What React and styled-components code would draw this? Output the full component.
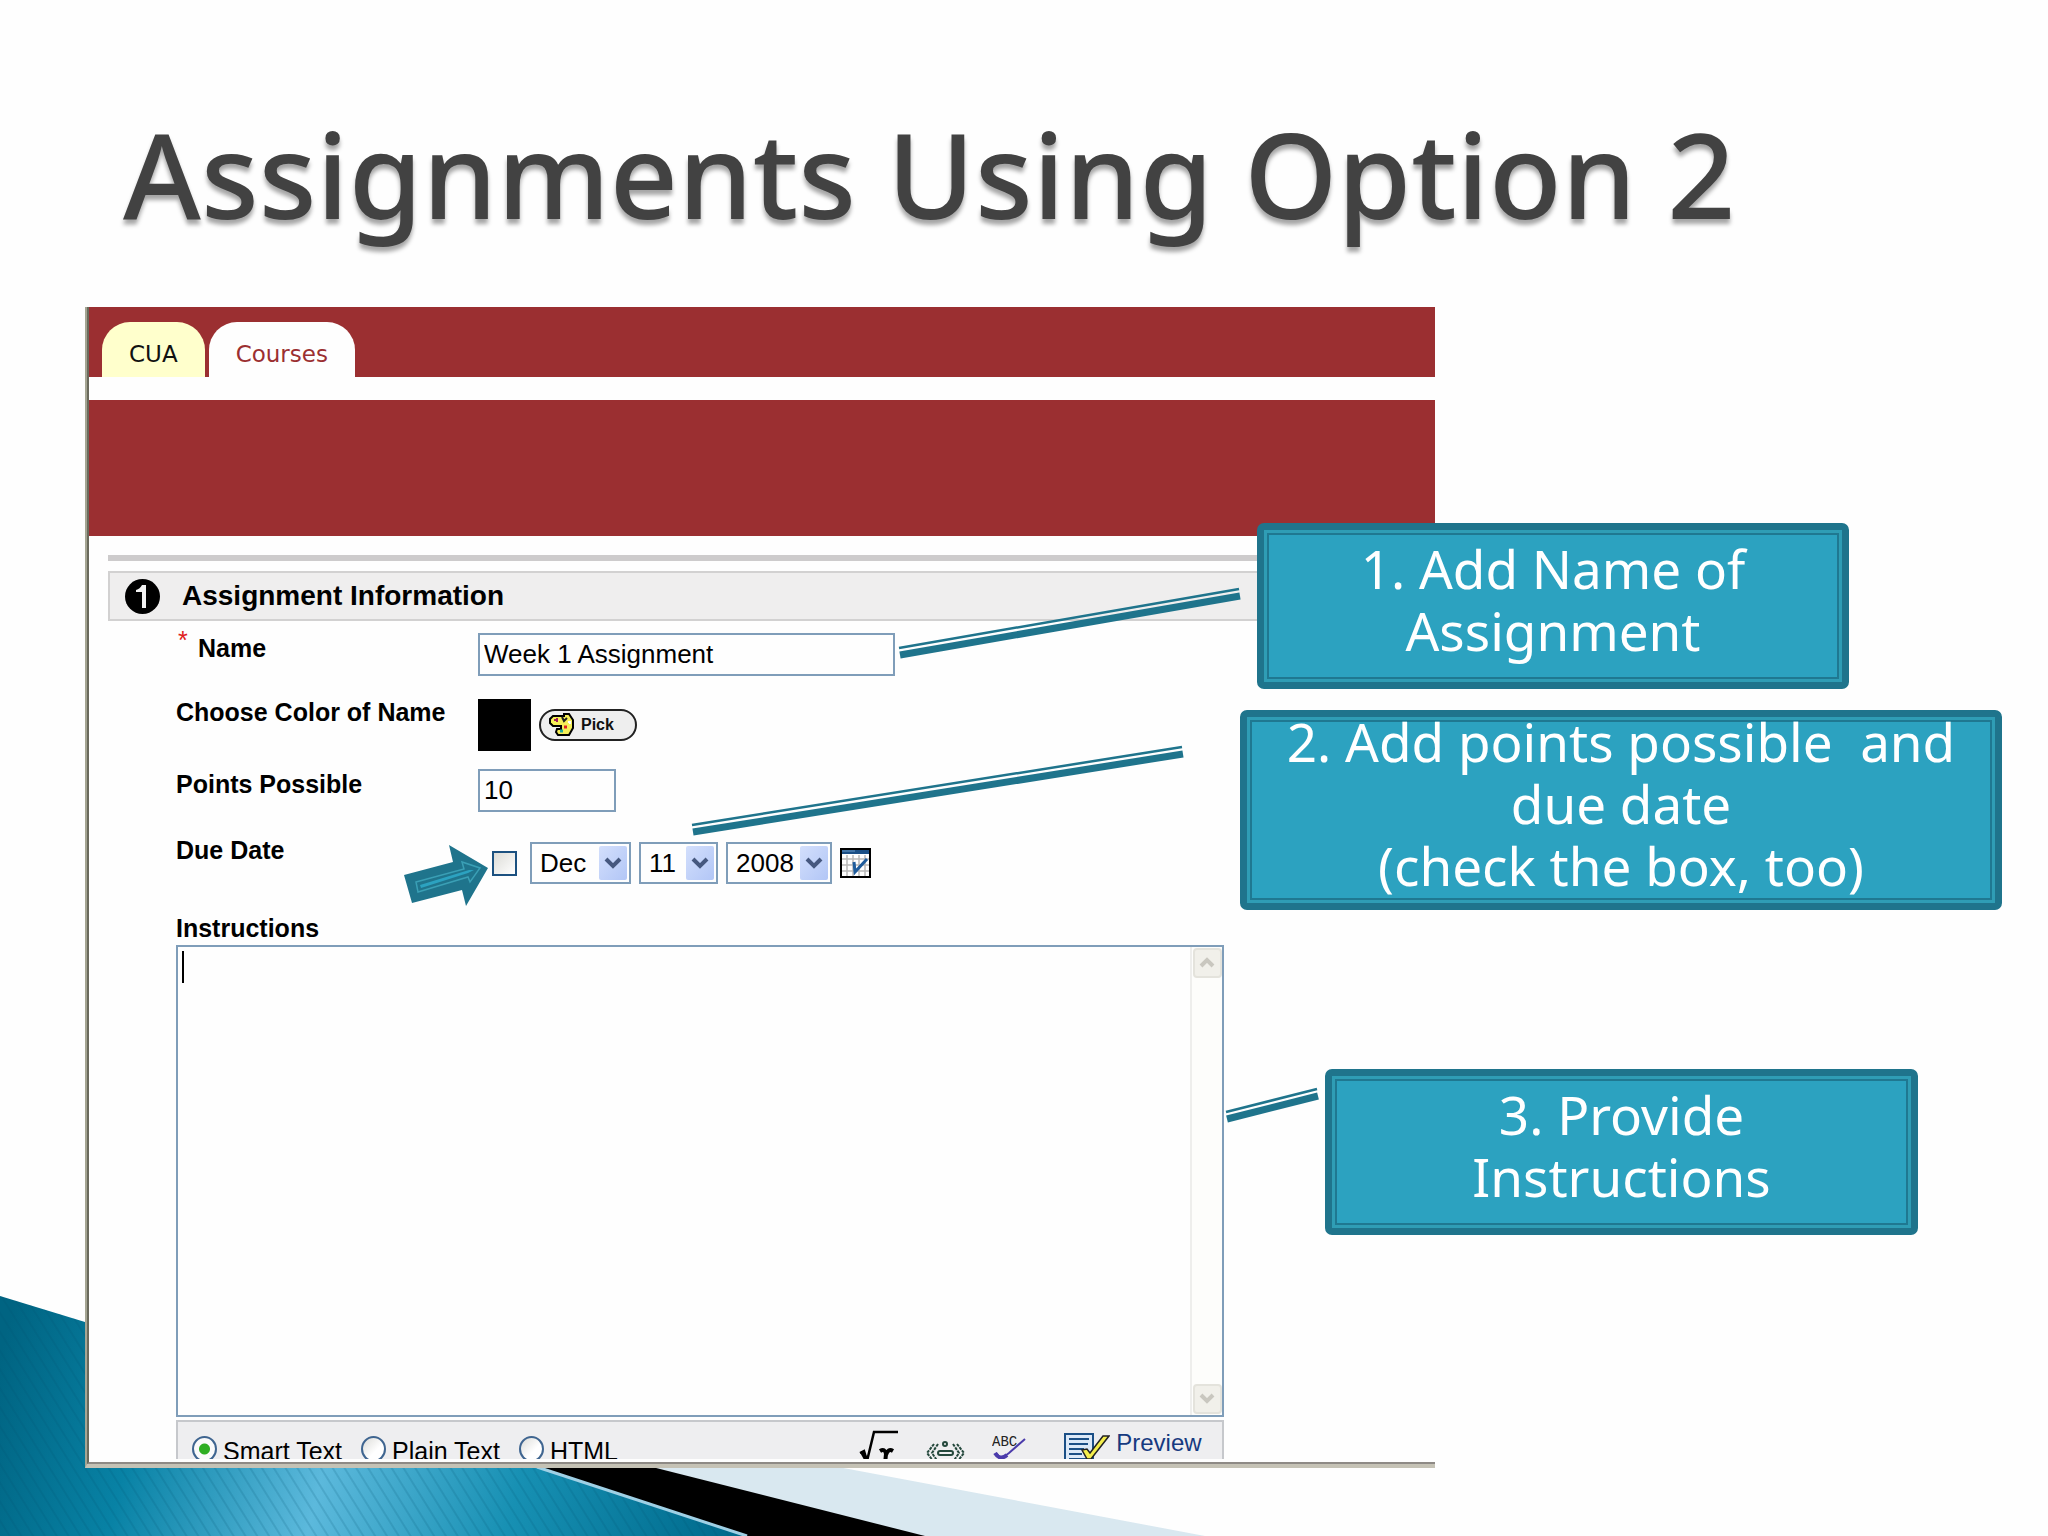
import React from "react";
import styled, { createGlobalStyle } from "styled-components";

const GlobalStyle = createGlobalStyle`
  * {
    box-sizing: border-box;
  }

  body {
    margin: 0;
    background: #fefefe;
    font-family: "Liberation Sans", Arial, sans-serif;
    color: #000;
  }
`;

const Slide = styled.main`
  position: relative;
  min-height: 100vh;
  padding: 0 0 68px 85px;
  overflow: hidden;
`;

const Title = styled.h1`
  margin: 0;
  padding: 103px 0 64px 38px;
  font-family: "Noto Sans", sans-serif;
  font-size: 119px;
  line-height: 140px;
  font-weight: 500;
  color: #424242;
  text-shadow: 0 5px 4px rgba(0, 0, 0, 0.35);
`;

const Waves = styled.svg`
  position: absolute;
  left: 0;
  bottom: 0;
`;

const Overlay = styled.svg`
  position: absolute;
  top: 0;
  left: 0;
  width: 100%;
  height: 100%;
  pointer-events: none;
`;

const Stage = styled.div`
  position: relative;
  display: grid;
  grid-template-columns: 11fr 5fr;
`;

const Panel = styled.section`
  background: #fefefe;
  border-left: 2px solid #a5a593;
  border-bottom: 4px solid #c5c2b5;
`;

const PanelBody = styled.div`
  border-left: 2px solid #6a6a5c;
  border-bottom: 2px solid #8e8a85;
  padding-bottom: 3px;
`;

const TabBar = styled.nav`
  display: flex;
  align-items: flex-end;
  gap: 4px;
  height: 70px;
  padding-left: 13px;
  background: #9b2f31;
`;

const Tab = styled.a`
  height: 55px;
  padding: 9px 27px 0;
  border-radius: 28px 28px 0 0;
  background: ${(props) => (props.$active ? "#fefefe" : "#ffffcc")};
  color: ${(props) => (props.$active ? "#9b2f31" : "#111")};
  font-family: "DejaVu Sans", Verdana, sans-serif;
  font-size: 23px;
  line-height: 46px;
  text-decoration: none;
`;

const Banner = styled.div`
  height: 136px;
  margin-top: 23px;
  background: #9b2f31;
`;

const Content = styled.div`
  padding: 19px 0 0 19px;
`;

const Rule = styled.hr`
  height: 6px;
  margin: 0 0 10px;
  border: 0;
  background: #cdcbcc;
`;

const SectionHeader = styled.header`
  display: flex;
  align-items: center;
  gap: 22px;
  height: 50px;
  padding-left: 15px;
  border: 2px solid #d2d1d1;
  border-right: 0;
  background: #efeeee;
`;

const SectionTitle = styled.h2`
  margin: 0;
  font-size: 28px;
  line-height: 36px;
`;

const Form = styled.form`
  padding: 12px 211px 0 68px;
`;

const Row = styled.div`
  display: grid;
  grid-template-columns: 302px 1fr;
  align-items: start;
  height: ${(props) => props.$height}px;
`;

const Label = styled.label`
  display: flex;
  font-size: 25px;
  line-height: 30px;
  font-weight: bold;
`;

const Required = styled.span`
  width: 22px;
  padding-left: 2px;
  color: #e02020;
  font-size: 25px;
  line-height: 14px;
  font-weight: normal;
`;

const Controls = styled.div`
  display: flex;
  align-items: center;
  gap: 8px;
  padding-top: ${(props) => props.$drop || 0}px;
`;

const TextInput = styled.input`
  width: ${(props) => props.$width}px;
  height: 43px;
  padding: 0 4px;
  border: 2px solid #7f9db9;
  border-radius: 0;
  background: #fefefe;
  font-family: inherit;
  font-size: 26px;
`;

const Swatch = styled.span`
  width: 53px;
  height: 52px;
  background: #000;
`;

const PickButton = styled.button`
  display: flex;
  align-items: center;
  gap: 7px;
  width: 98px;
  height: 32px;
  padding: 0 8px;
  border: 2px solid #222;
  border-radius: 16px;
  background: #eee;
  color: #111;
  font-family: inherit;
  font-size: 16px;
  font-weight: bold;
`;

const CheckBox = styled.input`
  appearance: none;
  width: 25px;
  height: 25px;
  margin: 0 5px 0 14px;
  border: 2px solid #1c5180;
  background: linear-gradient(135deg, #dcdcd7, #fff);
`;

const SelectBox = styled.span`
  position: relative;
  width: ${(props) => props.$width}px;
  height: 42px;

  svg {
    position: absolute;
    top: 4px;
    right: 4px;
    pointer-events: none;
  }
`;

const Select = styled.select`
  appearance: none;
  width: 100%;
  height: 100%;
  padding: 0 0 0 8px;
  border: 2px solid #7f9db9;
  border-radius: 0;
  background: #fefefe;
  color: #000;
  font-family: inherit;
  font-size: 26px;
`;

const IconButton = styled.button`
  display: flex;
  padding: 0;
  border: 0;
  background: none;
`;

const Editor = styled.div`
  position: relative;
  display: flex;
  height: 472px;
  margin-top: 2px;
  border: 2px solid #7f9db9;
`;

const Instructions = styled.textarea`
  flex: 1;
  padding: 4px;
  border: 0;
  outline: 0;
  resize: none;
  background: #fefefe;
  font-family: inherit;
  font-size: 26px;
`;

const Caret = styled.span`
  position: absolute;
  top: 4px;
  left: 4px;
  width: 2px;
  height: 32px;
  background: #000;
`;

const ScrollBar = styled.div`
  display: flex;
  flex-direction: column;
  justify-content: space-between;
  width: 32px;
  padding: 1px;
  border-left: 2px solid #eeeeec;
  background: #fdfdfb;
`;

const ScrollButton = styled.button`
  display: flex;
  align-items: center;
  justify-content: center;
  width: 29px;
  height: 30px;
  padding: 0;
  border: 2px solid #e4e3dc;
  border-radius: 4px;
  background: #f1f0ea;
`;

const Toolbar = styled.div`
  display: flex;
  align-items: flex-start;
  justify-content: space-between;
  height: 39px;
  margin-top: 3px;
  padding: 6px 20px 0 14px;
  border: 2px solid #c6c8cc;
  border-bottom: 0;
  background: #eeeef0;
  overflow: hidden;
`;

const Modes = styled.div`
  display: flex;
  gap: 19px;
  padding-top: 8px;
`;

const Mode = styled.label`
  display: flex;
  gap: 6px;
  font-size: 25px;
  line-height: 30px;
`;

const Radio = styled.input`
  appearance: none;
  width: 25px;
  height: 26px;
  margin: 0;
  border: 2px solid #3f6590;
  border-radius: 50%;
  background: linear-gradient(135deg, #dcdcd8, #fff 60%);

  &:checked {
    background: radial-gradient(circle, #2fae22 0 5px, #fafafa 6px);
  }
`;

const Tools = styled.div`
  display: flex;
  align-items: flex-start;
  gap: 27px;
`;

const PreviewLink = styled.a`
  display: flex;
  gap: 6px;
  margin-left: 11px;
  color: #163a80;
  font-size: 24px;
  line-height: 30px;
  text-decoration: none;
`;

const Callout = styled.aside`
  position: absolute;
  top: ${(props) => props.$top}px;
  left: ${(props) => props.$left}px;
  display: flex;
  align-items: center;
  justify-content: center;
  width: ${(props) => props.$width}px;
  height: ${(props) => props.$height}px;
  padding-bottom: 13px;
  border: 7px solid #1f748c;
  border-radius: 7px;
  background: #2ca2c0;
  box-shadow: inset 0 0 0 3px #2f9db5, inset 0 0 0 5px #1f7891;
  color: #fff;
  font-family: "Noto Sans", sans-serif;
  font-size: 53px;
  line-height: 62px;
  text-align: center;
  white-space: pre;
`;

const connectors = [
  { x1: 899, y1: 648, x2: 1239, y2: 589 },
  { x1: 692, y1: 825, x2: 1182, y2: 747 },
  { x1: 1226, y1: 1112, x2: 1317, y2: 1089 },
];

const callouts = [
  { top: 216, left: 1172, width: 592, height: 166, text: "1. Add Name of\nAssignment" },
  {
    top: 403,
    left: 1155,
    width: 762,
    height: 200,
    text: "2. Add points possible  and\ndue date\n(check the box, too)",
  },
  { top: 762, left: 1240, width: 593, height: 166, text: "3. Provide\nInstructions" },
];

const SlideWaves = () => (
  <Waves width="1210" height="240" viewBox="0 0 1210 240" aria-hidden="true">
    <defs>
      <linearGradient id="teal" gradientUnits="userSpaceOnUse" x1="0" y1="60" x2="720" y2="240">
        <stop offset="0" stopColor="#006482" />
        <stop offset="0.2" stopColor="#0882a5" />
        <stop offset="0.46" stopColor="#5cb9dc" />
        <stop offset="0.72" stopColor="#1790b3" />
        <stop offset="1" stopColor="#006c8e" />
      </linearGradient>
      <pattern
        id="stripes"
        width="10"
        height="10"
        patternUnits="userSpaceOnUse"
        patternTransform="rotate(-32)"
      >
        <rect width="2" height="10" fill="#00506e" opacity="0.16" />
      </pattern>
    </defs>
    <path d="M580 150 H726 L1205 240 H740 Z" fill="#d9e8f0" />
    <path d="M480 150 H569 L925 240 H700 Z" fill="#000" />
    <path d="M0 0 L85 26 L541 172 L748 240 H0 Z" fill="url(#teal)" />
    <path d="M0 0 L85 26 L541 172 L748 240 H0 Z" fill="url(#stripes)" />
    <path d="M537 171 L747 240" stroke="#9fd0e5" strokeWidth="3" />
  </Waves>
);

const Arrow = () => (
  <g>
    <path d="M404 875 L453 862 L449 845 L488 868 L466 906 L462 890 L412 903 Z" fill="#1f748c" />
    <path
      d="M416 882 L464 869 L462 862 L480 868 L470 882 L468 877 L418 892 Z"
      fill="#1f748c"
      stroke="#3a9fb5"
      strokeWidth="1.5"
    />
    <path d="M420 885 L469 870 L474 870 L468 873 L421 888 Z" fill="#2ca2c0" />
  </g>
);

const Chevron = () => (
  <svg width="28" height="34" viewBox="0 0 28 34" aria-hidden="true">
    <defs>
      <linearGradient id="chevron-fill" x1="0" y1="0" x2="1" y2="1">
        <stop offset="0" stopColor="#d3dffc" />
        <stop offset="1" stopColor="#b2c6f6" />
      </linearGradient>
    </defs>
    <rect width="28" height="34" rx="2" fill="url(#chevron-fill)" />
    <path d="M7 13 L14 20 L21 13" fill="none" stroke="#46587f" strokeWidth="4" />
  </svg>
);

const ScrollArrow = ({ down }) => (
  <svg width="18" height="14" viewBox="0 0 18 14" aria-hidden="true">
    <path
      d={down ? "M3 3 L9 9 L15 3" : "M3 10 L9 4 L15 10"}
      fill="none"
      stroke="#c9c7bf"
      strokeWidth="4"
    />
  </svg>
);

const NumberOne = () => (
  <svg width="35" height="35" viewBox="0 0 35 35" aria-hidden="true">
    <circle cx="17.5" cy="17.5" r="17.5" fill="#000" />
    <path d="M11 11 Q15 10 17 6 H21 V29 H17 V13 H11 Z" fill="#f2f2f2" />
  </svg>
);

const Palette = () => (
  <svg width="25" height="24" viewBox="0 0 25 24" aria-hidden="true">
    <path
      d="M4 3 H15 V1 H20 L24 7 V15 L20 22 H9 L7 19 L8 16 H12 V13 H4 L1 10 V6 Z"
      fill="#f5ef58"
      stroke="#000"
      strokeWidth="2"
    />
    <path d="M5 7 h4 M8 5 v4" stroke="#a0205a" strokeWidth="2" />
    <path d="M13 4 l2 4 l3 -3" fill="none" stroke="#222" strokeWidth="2" />
    <path d="M15 14 h3" stroke="#d22" strokeWidth="3" />
    <path d="M11 18 h3" stroke="#2a9" strokeWidth="3" />
    <path d="M19 9 h2 v2" fill="none" stroke="#fff" strokeWidth="2" />
  </svg>
);

const Calendar = () => (
  <svg width="31" height="30" viewBox="0 0 31 30" aria-hidden="true">
    <rect x="1" y="1" width="29" height="28" fill="#fff" stroke="#000" strokeWidth="2" />
    <path d="M2 4 H29" stroke="#1b4f86" strokeWidth="4" />
    <path d="M2 3 H15" stroke="#6b9cc8" strokeWidth="1" />
    <path d="M7 7 V28 M13 7 V28 M19 7 V28 M25 7 V28 M2 11 H29 M2 17 H29 M2 23 H29" stroke="#b9b9b9" strokeWidth="1.5" />
    <path d="M14 14 L15 24 L27 11" fill="none" stroke="#1f5c9c" strokeWidth="3" />
  </svg>
);

const MathIcon = () => (
  <svg width="40" height="36" viewBox="0 0 40 36" aria-hidden="true">
    <path d="M1 25 L5 23 L8 33 L15 4 H39" fill="none" stroke="#000" strokeWidth="2.5" />
    <path d="M3 24 L8 33" stroke="#000" strokeWidth="4" />
    <path d="M21 23 Q26 20 27 26 L26 36 M34 23 Q29 20 27 27" fill="none" stroke="#000" strokeWidth="4" />
  </svg>
);

const EquationIcon = () => (
  <svg width="39" height="36" viewBox="0 0 39 36" aria-hidden="true">
    <g fill="none" stroke="#24483c" strokeWidth="2">
      <path d="M8 16 L1 25 L8 34 M12 16 L6 25 L12 34 M31 16 L38 25 L31 34 M27 16 L33 25 L27 34" strokeDasharray="3 1" />
      <rect x="12" y="23" width="15" height="4" rx="2" />
      <circle cx="19" cy="16" r="2" />
      <circle cx="19" cy="34" r="2" />
    </g>
  </svg>
);

const SpellIcon = () => (
  <svg width="34" height="36" viewBox="0 0 34 36" aria-hidden="true">
    <text x="0" y="18" fontFamily="Liberation Mono, monospace" fontSize="14" fill="#222">
      ABC
    </text>
    <path d="M4 25 L9 31 L17 25 L33 11" fill="none" stroke="#4b3bab" strokeWidth="2" />
    <path d="M3 25 Q8 33 15 27" fill="none" stroke="#4b3bab" strokeWidth="4" />
  </svg>
);

const PreviewIcon = () => (
  <svg width="46" height="36" viewBox="0 0 46 36" aria-hidden="true">
    <rect x="1" y="6" width="28" height="34" fill="#dce9f8" stroke="#1b4f86" strokeWidth="2" />
    <path d="M5 11 H25 M5 16 H24 M5 21 H20 M5 26 H18 M5 31 H25" stroke="#1b4f86" strokeWidth="2" />
    <path d="M18 22 L23 21 L26 25 L39 8 L45 8 L27 31 L23 31 Z" fill="#f4ee4c" stroke="#222" strokeWidth="1.5" />
  </svg>
);

const DateSelect = ({ width, label, value }) => (
  <SelectBox $width={width}>
    <Select aria-label={label} defaultValue={value}>
      <option>{value}</option>
    </Select>
    <Chevron />
  </SelectBox>
);

const AssignmentForm = () => (
  <Form>
    <Row $height={64}>
      <Label htmlFor="name">
        <Required>*</Required>Name
      </Label>
      <TextInput id="name" $width={417} defaultValue="Week 1 Assignment" />
    </Row>
    <Row $height={72}>
      <Label htmlFor="pick">Choose Color of Name</Label>
      <Controls $drop={2}>
        <Swatch />
        <PickButton id="pick" type="button">
          <Palette />
          Pick
        </PickButton>
      </Controls>
    </Row>
    <Row $height={66}>
      <Label htmlFor="points">Points Possible</Label>
      <TextInput id="points" $width={138} defaultValue="10" />
    </Row>
    <Row $height={78}>
      <Label htmlFor="due">Due Date</Label>
      <Controls $drop={7}>
        <CheckBox id="due" type="checkbox" />
        <DateSelect width={101} label="Month" value="Dec" />
        <DateSelect width={79} label="Day" value="11" />
        <DateSelect width={106} label="Year" value="2008" />
        <IconButton type="button" aria-label="Calendar">
          <Calendar />
        </IconButton>
      </Controls>
    </Row>
    <Label htmlFor="instructions">Instructions</Label>
    <Editor>
      <Instructions id="instructions" />
      <Caret />
      <ScrollBar>
        <ScrollButton type="button" aria-label="Scroll up">
          <ScrollArrow />
        </ScrollButton>
        <ScrollButton type="button" aria-label="Scroll down">
          <ScrollArrow down />
        </ScrollButton>
      </ScrollBar>
    </Editor>
    <Toolbar>
      <Modes>
        <Mode>
          <Radio type="radio" name="mode" defaultChecked />
          Smart Text
        </Mode>
        <Mode>
          <Radio type="radio" name="mode" />
          Plain Text
        </Mode>
        <Mode>
          <Radio type="radio" name="mode" />
          HTML
        </Mode>
      </Modes>
      <Tools>
        <IconButton type="button" aria-label="Math">
          <MathIcon />
        </IconButton>
        <IconButton type="button" aria-label="Equation">
          <EquationIcon />
        </IconButton>
        <IconButton type="button" aria-label="Spell check">
          <SpellIcon />
        </IconButton>
        <PreviewLink href="#preview">
          <PreviewIcon />
          Preview
        </PreviewLink>
      </Tools>
    </Toolbar>
  </Form>
);

const App = () => (
  <Slide>
    <GlobalStyle />
    <SlideWaves />
    <Title>Assignments Using Option 2</Title>
    <Stage>
      <Panel>
        <PanelBody>
          <TabBar>
            <Tab href="#cua">CUA</Tab>
            <Tab href="#courses" $active>
              Courses
            </Tab>
          </TabBar>
          <Banner />
          <Content>
            <Rule />
            <SectionHeader>
              <NumberOne />
              <SectionTitle>Assignment Information</SectionTitle>
            </SectionHeader>
            <AssignmentForm />
          </Content>
        </PanelBody>
      </Panel>
      {callouts.map((item) => (
        <Callout
          key={item.top}
          $top={item.top}
          $left={item.left}
          $width={item.width}
          $height={item.height}
        >
          {item.text}
        </Callout>
      ))}
    </Stage>
    <Overlay aria-hidden="true">
      {connectors.map(({ x1, y1, x2, y2 }) => (
        <g key={x1} stroke="#1f748c">
          <line x1={x1} y1={y1} x2={x2} y2={y2} strokeWidth="2.5" />
          <line x1={x1 + 1} y1={y1 + 7} x2={x2 + 1} y2={y2 + 7} strokeWidth="7" />
        </g>
      ))}
      <Arrow />
    </Overlay>
  </Slide>
);

export default App;
